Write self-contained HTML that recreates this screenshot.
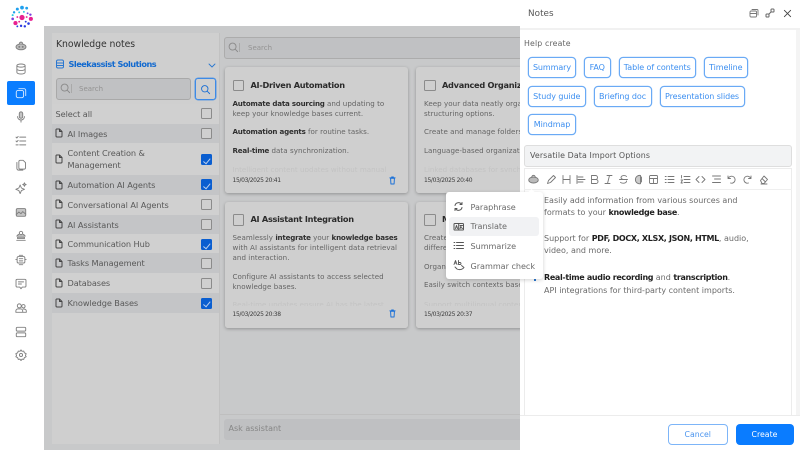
<!DOCTYPE html>
<html><head><meta charset="utf-8"><style>
*{box-sizing:border-box}
html,body{margin:0;padding:0;width:800px;height:450px;overflow:hidden;background:#fff}
body{font-family:"DejaVu Sans","Liberation Sans",sans-serif;font-size:8px;color:#555;position:relative;filter:blur(.3px)}
.a{position:absolute}
.t{position:absolute;white-space:nowrap}
svg{position:absolute;fill:none;stroke-linecap:round;stroke-linejoin:round}
.side svg{stroke:#808080;stroke-width:1.1;width:12px;height:12px;left:15px;margin-top:1px}
.row{position:absolute;left:52px;width:167px;background:#d0d0d0}
.row.d{background:#c4c5c7}
.row .t{left:15.5px;color:#595959;font-size:8.2px;letter-spacing:-.08px}
.cb{position:absolute;width:11px;height:11px;border:1px solid #8b8b8b;border-radius:1.5px;left:149px;background:#cfcfcf}
.cb.on{background:#0a5ed0;border-color:#0a5ed0}
.cb.on:after{content:"";position:absolute;left:3px;top:1.5px;width:3px;height:5.5px;border:solid #bcd0ee;border-width:0 .8px .8px 0;transform:rotate(40deg)}
.card{position:absolute;width:183px;height:126px;background:#cfcfcf;border-radius:3px;box-shadow:0 1px 3px rgba(0,0,0,.28);overflow:hidden}
.card .cb{left:8px;top:12.5px;background:none;width:11.5px;height:11.5px}
.card .h{position:absolute;left:26px;top:12.5px;font-size:8.2px;font-weight:bold;color:#2b2b2b;white-space:nowrap;letter-spacing:-.28px}
.card .p{position:absolute;left:8px;font-size:7.1px;line-height:10.1px;color:#646464;white-space:nowrap;letter-spacing:.05px}
.card b{color:#2f2f2f;letter-spacing:-.2px}
.card .f{position:absolute;left:8px;top:109.5px;font-size:6px;color:#3d3d3d;white-space:nowrap;letter-spacing:-.35px}
.card .fade{position:absolute;left:8px;top:98px;font-size:7.1px;color:#c3c3c3;white-space:nowrap}
.chip{position:absolute;height:21px;border:1px solid #6aaaf5;border-radius:4px;background:#fff;color:#3d8ff0;font-size:8px;line-height:19.5px;text-align:center;white-space:nowrap;box-shadow:0 0 0 .3px #8fc0f8;letter-spacing:-.08px}
.ed{position:absolute;left:544px;font-size:8px;line-height:12px;color:#6a6a6a;white-space:nowrap}
.ed b{color:#1f1f1f;letter-spacing:-.33px}
.tb{stroke:#777;stroke-width:.9;width:11px;height:11px;top:173.5px}
.pi{position:absolute;left:470.5px;font-size:8.1px;color:#6a6a6a;white-space:nowrap;letter-spacing:-.03px}
</style></head><body>

<!-- main overlay -->
<div class="a" style="left:44px;top:26px;width:476px;height:424px;background:#c8c9ca"></div>
<div class="a" style="left:52px;top:33px;width:167px;height:411px;background:#cfcfcf"></div>
<div class="a" style="left:219px;top:33px;width:1px;height:411px;background:#c2c2c2"></div>

<!-- sidebar -->
<div class="side">
<svg viewBox="0 0 30 30" style="left:8px;top:3px;width:28px;height:28px;stroke:none;margin:0">
<g fill="#1fa0ee"><circle cx="15" cy="5" r="2"/><circle cx="20" cy="5.500" r="1.500"/><circle cx="10" cy="6.500" r="1.600"/><circle cx="6.500" cy="10" r="1.300"/></g>
<g fill="#29c9e0"><circle cx="12" cy="10" r="1"/><circle cx="17" cy="9.500" r="1"/><circle cx="5" cy="13" r="1.100"/></g>
<g fill="#7a3fe0"><circle cx="5" cy="17" r="1.400"/><circle cx="21" cy="11" r="1"/><circle cx="24" cy="12.500" r="1.300"/></g>
<g fill="#e8208f"><circle cx="15" cy="15.500" r="2.800"/><circle cx="24.500" cy="17" r="2.200"/><circle cx="8" cy="21.500" r="2.200"/><circle cx="10" cy="15" r="1"/><circle cx="20" cy="15" r="1"/><circle cx="12" cy="20" r="1"/></g>
<g fill="#2a3ae0"><circle cx="14" cy="24.500" r="1.300"/><circle cx="18" cy="25" r="1.300"/><circle cx="22" cy="22" r="1.400"/><circle cx="19" cy="20" r="1"/><circle cx="10" cy="25" r="1"/></g>
</svg>
<svg viewBox="0 0 14 14" style="top:39px;fill:#bdbdbd"><ellipse cx="7" cy="8" rx="5.800" ry="3.400"/><path d="M5 4.500a2 2 0 0 1 4 0"/><circle cx="5" cy="8" r=".6"/><circle cx="9" cy="8" r=".6"/></svg>
<svg viewBox="0 0 14 14" style="top:62px"><ellipse cx="7" cy="3" rx="4.800" ry="1.800"/><path d="M2.200 3v8c0 1 2.200 1.800 4.800 1.800s4.800-.8 4.800-1.800V3M2.200 7c0 1 2.200 1.800 4.800 1.800s4.800-.8 4.800-1.800"/></svg>
<div class="a" style="left:7px;top:81px;width:28px;height:24px;background:#0a7dff;border-radius:2px"></div>
<svg viewBox="0 0 14 14" style="top:86px;stroke:#d5e8ff"><rect x="1.500" y="4" width="8.500" height="8.500" rx="2"/><path d="M4.500 2h6a2 2 0 0 1 2 2v6"/></svg>
<svg viewBox="0 0 14 14" style="top:110px"><rect x="5" y="1" width="4" height="7.500" rx="2" fill="#c5c5c5"/><path d="M3 6.500a4 4 0 0 0 8 0M7 10.500V13"/></svg>
<svg viewBox="0 0 14 14" style="top:134px"><path d="M5.500 2.500h7M5.500 7h7M5.500 11.500h7M1.200 2.500l1 1 1.500-1.800M1.200 7l1 1 1.500-1.800M1.200 11.500h2.500"/></svg>
<svg viewBox="0 0 14 14" style="top:158px"><path d="M6 1.500h3.500l2.800 2.800v6a1.500 1.500 0 0 1-1.500 1.500H6a1.500 1.500 0 0 1-1.500-1.500V3A1.500 1.500 0 0 1 6 1.500zM2.200 4v7a2 2 0 0 0 2 2h5"/></svg>
<svg viewBox="0 0 14 14" style="top:181px"><path d="M6 3.500l1.500 3.500 3.500 1.500-3.500 1.500L6 13.500 4.500 10 1 8.500 4.500 7zM11 1l.6 1.400L13 3l-1.400.6L11 5l-.6-1.400L9 3l1.400-.6z"/></svg>
<svg viewBox="0 0 14 14" style="top:205px;fill:#c5c5c5"><rect x="1.500" y="3" width="11" height="9" rx="1.500"/><path d="M1.500 10l3-3 2.500 2 2-2.500 3.500 3"/></svg>
<svg viewBox="0 0 14 14" style="top:229px"><circle cx="7" cy="3.500" r="2"/><path d="M2 7h10M3 6.500c0-1 1-1.500 2-1.500M11 6.500c0-1-1-1.500-2-1.500M3 8.500h8v1.500H3zM2 12h10"/></svg>
<svg viewBox="0 0 14 14" style="top:253px"><rect x="2.500" y="3" width="9" height="7.500" rx="1.500"/><path d="M1 6.500h1.500M11.500 6.500H13M5 1.500h4M5 12.500h4M5 5.500h4M5 8h4"/></svg>
<svg viewBox="0 0 14 14" style="top:277px"><path d="M2.500 1.500h9a1.300 1.300 0 0 1 1.300 1.300v6.500a1.300 1.300 0 0 1-1.300 1.300H8.500L7 12.500 5.500 10.600h-3A1.300 1.300 0 0 1 1.200 9.300V2.800a1.300 1.300 0 0 1 1.300-1.300zM4 4.500h6M4 7h3.500"/></svg>
<svg viewBox="0 0 14 14" style="top:301px"><circle cx="5" cy="4.500" r="2.300"/><circle cx="9.800" cy="5" r="2"/><path d="M1 12v-1.500A2.500 2.500 0 0 1 3.500 8h3A2.500 2.500 0 0 1 9 10.500V12zM10 8.300h1A2.300 2.300 0 0 1 13.200 10.600V12H9.500"/></svg>
<svg viewBox="0 0 14 14" style="top:325px"><rect x="1.500" y="1.500" width="11" height="4.500" rx="1.300"/><rect x="1.500" y="8" width="11" height="4.500" rx="1.300"/></svg>
<svg viewBox="0 0 14 14" style="top:348px"><circle cx="7" cy="7" r="1.800"/><path d="M7 1l1.200 1.700 2-.3.700 2L13 5.500 12.200 7.500l.8 1.500-2.100 1.100-.7 2-2-.3L7 13.500l-1.200-1.700-2 .3-.7-2L1 9l.8-1.500L1 5.500l2.100-1.100.7-2 2 .3z"/></svg>
</div>

<!-- left panel -->
<div class="t" style="left:56px;top:38.500px;font-size:9.300px;color:#333;letter-spacing:-.05px">Knowledge notes</div>
<svg viewBox="0 0 10 10" style="left:55px;top:59px;width:10px;height:10px;stroke:#2a77d0;stroke-width:1"><rect x="1.500" y="1" width="7" height="8" rx="1.500"/><path d="M1.500 4h7M1.500 6.500h7"/></svg>
<div class="t" style="left:68.500px;top:59px;font-size:8.200px;font-weight:bold;color:#1169cf;letter-spacing:-.5px">Sleekassist Solutions</div>
<svg viewBox="0 0 8 5" style="left:208px;top:62.500px;width:8px;height:5px;stroke:#2a77d0;stroke-width:.9"><path d="M1 1l3 3 3-3"/></svg>
<div class="a" style="left:55.500px;top:78px;width:135.500px;height:22px;background:#c0c1c3;border:1px solid #a9a9a9;border-radius:3px"></div>
<svg viewBox="0 0 12 12" style="left:60px;top:83px;width:11px;height:11px;stroke:#8a8a8a;stroke-width:1"><circle cx="5" cy="5" r="3.800"/><path d="M8 8l2.500 2.500"/></svg>
<div class="a" style="left:71px;top:84px;width:1px;height:9px;background:#a9a9a9"></div>
<div class="t" style="left:79px;top:85px;font-size:7px;color:#939393">Search</div>
<div class="a" style="left:194.500px;top:78px;width:21.500px;height:22px;border:1px solid #3d8ae6;border-radius:3px;box-shadow:0 0 0 .4px #3d8ae6"></div>
<svg viewBox="0 0 12 12" style="left:200px;top:83.500px;width:11px;height:11px;stroke:#1b6fd4;stroke-width:1"><circle cx="5.200" cy="5.200" r="3.500"/><path d="M8 8l2.500 2.500"/></svg>

<div class="row" style="top:104px;height:20px"><div class="t" style="left:3.500px;top:5px">Select all</div><div class="cb" style="top:4px"></div></div>
<div class="row d" style="top:124px;height:19px"><div class="t" style="top:4.500px">AI Images</div><div class="cb" style="top:4px"></div></div>
<div class="row" style="top:143px;height:32px"><div class="t" style="top:4px;line-height:12px">Content Creation &amp;<br>Management</div><div class="cb on" style="top:11px"></div></div>
<div class="row d" style="top:175px;height:20px"><div class="t" style="top:5px">Automation AI Agents</div><div class="cb on" style="top:4px"></div></div>
<div class="row" style="top:195px;height:20px"><div class="t" style="top:4.500px">Conversational AI Agents</div><div class="cb" style="top:4px"></div></div>
<div class="row d" style="top:215px;height:19px"><div class="t" style="top:4.500px">AI Assistants</div><div class="cb" style="top:4px"></div></div>
<div class="row" style="top:234px;height:19px"><div class="t" style="top:4.500px">Communication Hub</div><div class="cb on" style="top:5px"></div></div>
<div class="row d" style="top:253px;height:20px"><div class="t" style="top:5px">Tasks Management</div><div class="cb" style="top:4.500px"></div></div>
<div class="row" style="top:273px;height:20px"><div class="t" style="top:4.500px">Databases</div><div class="cb" style="top:4.500px"></div></div>
<div class="row d" style="top:293px;height:20px"><div class="t" style="top:4.500px">Knowledge Bases</div><div class="cb on" style="top:4.500px"></div></div>

<svg viewBox="0 0 8 10" style="left:54.500px;top:128px;width:8px;height:10px;stroke:#444;stroke-width:1"><path d="M1.500 1h3l2.500 2.500V8a1 1 0 0 1-1 1H2a1 1 0 0 1-1-1V1.500zM4.500 1v2.500H7"/></svg>
<svg viewBox="0 0 8 10" style="left:54.500px;top:154px;width:8px;height:10px;stroke:#444;stroke-width:1"><path d="M1.500 1h3l2.500 2.500V8a1 1 0 0 1-1 1H2a1 1 0 0 1-1-1V1.500zM4.500 1v2.500H7"/></svg>
<svg viewBox="0 0 8 10" style="left:54.500px;top:180px;width:8px;height:10px;stroke:#444;stroke-width:1"><path d="M1.500 1h3l2.500 2.500V8a1 1 0 0 1-1 1H2a1 1 0 0 1-1-1V1.500zM4.500 1v2.500H7"/></svg>
<svg viewBox="0 0 8 10" style="left:54.500px;top:199px;width:8px;height:10px;stroke:#444;stroke-width:1"><path d="M1.500 1h3l2.500 2.500V8a1 1 0 0 1-1 1H2a1 1 0 0 1-1-1V1.500zM4.500 1v2.500H7"/></svg>
<svg viewBox="0 0 8 10" style="left:54.500px;top:219px;width:8px;height:10px;stroke:#444;stroke-width:1"><path d="M1.500 1h3l2.500 2.500V8a1 1 0 0 1-1 1H2a1 1 0 0 1-1-1V1.500zM4.500 1v2.500H7"/></svg>
<svg viewBox="0 0 8 10" style="left:54.500px;top:239px;width:8px;height:10px;stroke:#444;stroke-width:1"><path d="M1.500 1h3l2.500 2.500V8a1 1 0 0 1-1 1H2a1 1 0 0 1-1-1V1.500zM4.500 1v2.500H7"/></svg>
<svg viewBox="0 0 8 10" style="left:54.500px;top:258px;width:8px;height:10px;stroke:#444;stroke-width:1"><path d="M1.500 1h3l2.500 2.500V8a1 1 0 0 1-1 1H2a1 1 0 0 1-1-1V1.500zM4.500 1v2.500H7"/></svg>
<svg viewBox="0 0 8 10" style="left:54.500px;top:278px;width:8px;height:10px;stroke:#444;stroke-width:1"><path d="M1.500 1h3l2.500 2.500V8a1 1 0 0 1-1 1H2a1 1 0 0 1-1-1V1.500zM4.500 1v2.500H7"/></svg>
<svg viewBox="0 0 8 10" style="left:54.500px;top:298px;width:8px;height:10px;stroke:#444;stroke-width:1"><path d="M1.500 1h3l2.500 2.500V8a1 1 0 0 1-1 1H2a1 1 0 0 1-1-1V1.500zM4.500 1v2.500H7"/></svg>

<!-- center -->
<div class="a" style="left:224px;top:37px;width:300px;height:22px;background:#c0c1c3;border:1px solid #acacac;border-radius:3px"></div>
<svg viewBox="0 0 12 12" style="left:228px;top:42px;width:11px;height:11px;stroke:#8a8a8a;stroke-width:1"><circle cx="5" cy="5" r="3.800"/><path d="M8 8l2.500 2.500"/></svg>
<div class="a" style="left:239px;top:43px;width:1px;height:9px;background:#a9a9a9"></div>
<div class="t" style="left:248px;top:44px;font-size:7px;color:#939393">Search</div>

<div class="card" style="left:224.500px;top:67px">
 <div class="cb"></div><div class="h">AI-Driven Automation</div>
 <div class="p" style="top:32px"><b>Automate data sourcing</b> and updating to<br>keep your knowledge bases current.</div>
 <div class="p" style="top:60px"><b>Automation agents</b> for routine tasks.</div>
 <div class="p" style="top:78.500px"><b>Real-time</b> data synchronization.</div>
 <div class="fade">Intelligent content updates without manual</div>
 <div class="a" style="left:0;top:104.500px;width:183px;height:21.500px;background:#cfcfcf"></div>
 <div class="f">15/03/2025 20:41</div>
</div>
<svg viewBox="0 0 8 10" style="left:389px;top:175.500px;width:7px;height:9px;stroke:#1a70d8;stroke-width:1.100"><path d="M1 2h6M3 1h2M1.800 2.500l.4 6.500h3.600l.4-6.500z"/></svg>

<div class="card" style="left:416px;top:67px">
 <div class="cb"></div><div class="h">Advanced Organization</div>
 <div class="p" style="top:32px">Keep your data neatly organized with<br>structuring options.</div>
 <div class="p" style="top:60px">Create and manage folders.</div>
 <div class="p" style="top:78.500px">Language-based organization.</div>
 <div class="fade">Linked databases for synchronization</div>
 <div class="a" style="left:0;top:104.500px;width:183px;height:21.500px;background:#cfcfcf"></div>
 <div class="f">15/03/2025 20:40</div>
</div>

<div class="card" style="left:224.500px;top:201.500px">
 <div class="cb"></div><div class="h">AI Assistant Integration</div>
 <div class="p" style="top:31px">Seamlessly <b>integrate</b> your <b>knowledge bases</b><br>with AI assistants for intelligent data retrieval<br>and interaction.</div>
 <div class="p" style="top:70px">Configure AI assistants to access selected<br>knowledge bases.</div>
 <div class="fade">Real-time updates ensure AI has the latest</div>
 <div class="a" style="left:0;top:104.500px;width:183px;height:21.500px;background:#cfcfcf"></div>
 <div class="f">15/03/2025 20:38</div>
</div>
<svg viewBox="0 0 8 10" style="left:389px;top:309px;width:7px;height:9px;stroke:#1a70d8;stroke-width:1.100"><path d="M1 2h6M3 1h2M1.800 2.500l.4 6.500h3.600l.4-6.500z"/></svg>

<div class="card" style="left:416px;top:201.500px">
 <div class="cb"></div><div class="h">Multilingual Support</div>
 <div class="p" style="top:31px">Create and manage notes in<br>different languages.</div>
 <div class="p" style="top:60px">Organize by language.</div>
 <div class="p" style="top:78.500px">Easily switch contexts based on language.</div>
 <div class="fade">Support multilingual content seamlessly.</div>
 <div class="a" style="left:0;top:104.500px;width:183px;height:21.500px;background:#cfcfcf"></div>
 <div class="f">15/03/2025 20:37</div>
</div>

<div class="a" style="left:220px;top:414px;width:300px;height:1px;background:#bfbfbf"></div>
<div class="a" style="left:224px;top:419px;width:300px;height:21px;background:#bfc0c2;border-radius:3px"></div>
<div class="t" style="left:228.500px;top:423.500px;font-size:8px;color:#868686">Ask assistant</div>

<!-- drawer -->
<div class="a" style="left:520px;top:0;width:280px;height:450px;background:#fff"></div>
<div class="a" style="left:520px;top:28px;width:280px;height:2px;background:#f1f1f1"></div>
<div class="t" style="left:528px;top:9px;font-size:8.800px;color:#555;letter-spacing:.05px">Notes</div>
<svg viewBox="0 0 10 10" style="left:748.500px;top:8px;width:10px;height:10px;stroke:#777;stroke-width:.9"><rect x="1" y="3" width="6.500" height="6" rx="1"/><path d="M3 1.500h5a1 1 0 0 1 1 1V7M1 5.500h6.500"/></svg>
<svg viewBox="0 0 10 10" style="left:764.500px;top:8px;width:10px;height:10px;stroke:#666;stroke-width:1"><rect x="1" y="6" width="3" height="3" rx=".8"/><rect x="6" y="1" width="3" height="3" rx=".8"/><path d="M4 6l2-2"/></svg>
<svg viewBox="0 0 10 10" style="left:782.500px;top:8.500px;width:9px;height:9px;stroke:#444;stroke-width:1"><path d="M1.500 1.500l7 7M8.500 1.500l-7 7"/></svg>

<div class="t" style="left:524px;top:38.500px;font-size:7.800px;color:#666;letter-spacing:.15px">Help create</div>
<div class="chip" style="left:528px;top:56.500px;width:48px">Summary</div>
<div class="chip" style="left:584px;top:56.500px;width:26.500px">FAQ</div>
<div class="chip" style="left:618.500px;top:56.500px;width:77.500px">Table of contents</div>
<div class="chip" style="left:704px;top:56.500px;width:43.500px">Timeline</div>
<div class="chip" style="left:528px;top:85.500px;width:57.500px">Study guide</div>
<div class="chip" style="left:593.500px;top:85.500px;width:58px">Briefing doc</div>
<div class="chip" style="left:659.500px;top:85.500px;width:85px">Presentation slides</div>
<div class="chip" style="left:528px;top:114px;width:48px">Mindmap</div>

<div class="a" style="left:524px;top:145px;width:267.500px;height:21.500px;background:#f2f3f4;border:1px solid #dedede;border-radius:3px"></div>
<div class="t" style="left:530px;top:151px;font-size:7.900px;color:#555;letter-spacing:.1px">Versatile Data Import Options</div>

<div class="a" style="left:524px;top:168px;width:267.500px;height:247px;border:1px solid #ececec;border-bottom:none"></div>
<div class="a" style="left:524px;top:189px;width:267.500px;height:1px;background:#efefef"></div>
<div class="a" style="left:795.500px;top:30px;width:4.500px;height:385px;background:#f4f4f4"></div>

<svg class="tb" viewBox="0 0 11 11" style="left:528px;fill:#bbb"><ellipse cx="5.500" cy="6" rx="4.800" ry="3"/><path d="M3.800 3a1.700 1.700 0 0 1 3.400 0"/></svg>
<svg class="tb" viewBox="0 0 11 11" style="left:546px"><path d="M1.500 9.500l1-3 5-5 2 2-5 5z"/></svg>
<svg class="tb" viewBox="0 0 11 11" style="left:561px"><path d="M2 1.500v8M9 1.500v8M2 5.500h7"/></svg>
<svg class="tb" viewBox="0 0 11 11" style="left:575px"><path d="M2 1.500v8M3 3h5M3 5.500h7M3 8h5"/></svg>
<svg class="tb" viewBox="0 0 11 11" style="left:589px"><path d="M2.500 1.500h4a2 2 0 0 1 0 4h-4zM2.500 5.500h4.500a2 2 0 0 1 0 4H2.500z"/></svg>
<svg class="tb" viewBox="0 0 11 11" style="left:603px"><path d="M4 1.500h5M2 9.500h5M6.500 1.500l-2 8"/></svg>
<svg class="tb" viewBox="0 0 11 11" style="left:618px"><path d="M8.500 2.500c-1-1.200-5-1.500-5.500 1 0 1.500 2 2 2.500 2M1.500 5.500h8M8.500 7c0 2.500-4.500 2.800-6 1.300"/></svg>
<svg class="tb" viewBox="0 0 11 11" style="left:633px;fill:#ccc"><path d="M7.500 1.500a4.200 4.200 0 1 0 0 8.200z"/><path d="M8.500 3v5"/></svg>
<svg class="tb" viewBox="0 0 11 11" style="left:648px"><rect x="1.500" y="1.500" width="8" height="8" rx="1"/><path d="M1.500 4.500h8M5.500 4.500v5"/></svg>
<svg class="tb" viewBox="0 0 11 11" style="left:664px"><path d="M4 2.500h6M4 5.500h6M4 8.500h6M1.200 2.500h1M1.200 5.500h1M1.200 8.500h1"/></svg>
<svg class="tb" viewBox="0 0 11 11" style="left:680px"><path d="M4 2.500h6M4 5.500h6M4 8.500h6M1.500 1.500v2.500M1 6h1.500L1 9h1.500"/></svg>
<svg class="tb" viewBox="0 0 11 11" style="left:695px"><path d="M4 2.500l-3 3 3 3M7 2.500l3 3-3 3"/></svg>
<svg class="tb" viewBox="0 0 11 11" style="left:711px"><path d="M1.500 2h8M3.500 5h6M1.500 8.500h8"/></svg>
<svg class="tb" viewBox="0 0 11 11" style="left:726px"><path d="M2 2v2.500h2.500M2.300 4.500A3.500 3.500 0 1 1 4.500 9"/></svg>
<svg class="tb" viewBox="0 0 11 11" style="left:742px"><path d="M9 2v2.500H6.500M8.700 4.500A3.500 3.500 0 1 0 6.500 9"/></svg>
<svg class="tb" viewBox="0 0 11 11" style="left:758px"><path d="M2.500 6.500L6 2l3.500 3.500L6 9.500H4zM4 4.500l3.500 3.500M3 10h6"/></svg>

<div class="ed" style="top:194.700px">Easily add information from various sources and<br>formats to your <b>knowledge base</b>.</div>
<div class="ed" style="top:233px">Support for <b>PDF, DOCX, XLSX, JSON, HTML</b>, audio,<br>video, and more.</div>
<div class="ed" style="top:271.700px"><b>Real-time audio recording</b> and <b>transcription</b>.</div>
<div class="ed" style="top:285px">API integrations for third-party content imports.</div>
<div class="a" style="left:534px;top:279px;width:1.500px;height:1.500px;background:#2a77d0"></div>

<div class="a" style="left:520px;top:415px;width:280px;height:1px;background:#ececec"></div>
<div class="a" style="left:668px;top:423.500px;width:59.500px;height:21.500px;border:1px solid #7db5f8;border-radius:4px;color:#4a94ef;font-size:7.800px;text-align:center;line-height:19.500px">Cancel</div>
<div class="a" style="left:735.500px;top:423.500px;width:58px;height:21.500px;background:#0a7cff;border-radius:4px;color:#fff;font-size:7.800px;text-align:center;line-height:21px">Create</div>

<!-- popup -->
<div class="a" style="left:446px;top:192px;width:96.500px;height:87px;background:#fff;border-radius:3px;box-shadow:0 1px 4px rgba(0,0,0,.18)"></div>
<div class="a" style="left:529px;top:189.500px;width:5px;height:5px;background:#fff;transform:rotate(45deg)"></div>
<div class="a" style="left:449px;top:217px;width:90px;height:19px;background:#f1f2f4;border-radius:3px"></div>
<div class="pi" style="top:201.700px">Paraphrase</div>
<div class="pi" style="top:221px">Translate</div>
<div class="pi" style="top:241px">Summarize</div>
<div class="pi" style="top:260.500px">Grammar check</div>
<svg viewBox="0 0 11 11" style="left:453px;top:201px;width:11px;height:11px;stroke:#555;stroke-width:1"><path d="M2 4.500A3.500 3.500 0 0 1 8.500 3.500M9 6.500A3.500 3.500 0 0 1 2.500 7.500M7 3.500h2V1.500M4 7.500H2v2"/></svg>
<svg viewBox="0 0 11 11" style="left:453px;top:220.500px;width:11px;height:11px;stroke:#555;stroke-width:1"><rect x="1" y="2.500" width="9.500" height="6.500" rx=".8"/><path d="M5.700 2.500v6.500M2.500 7.500l1-3 1 3M7 4.500h2.500M8 4.500c0 1.500-.5 2.500-1 3M7.500 6l2 1.500"/></svg>
<svg viewBox="0 0 11 11" style="left:453px;top:240px;width:11px;height:11px;stroke:#555;stroke-width:1"><path d="M3.500 2.500h7M3.500 5.500h7M3.500 8.500h7M1 2.500h.8M1 5.500h.8M1 8.500h.8"/></svg>
<svg viewBox="0 0 12 12" style="left:453px;top:259px;width:12px;height:12px;stroke:#555;stroke-width:.9"><path d="M1 5.500l1.500-4 1.500 4M1.600 4h1.800M5.500 1.500v4h1.500a1 1 0 0 0 0-2H5.500M2 8l2 2c2 1 5 1 7-1.500M8.500 6.500l2.500 2-1 .8"/></svg>

</body></html>
